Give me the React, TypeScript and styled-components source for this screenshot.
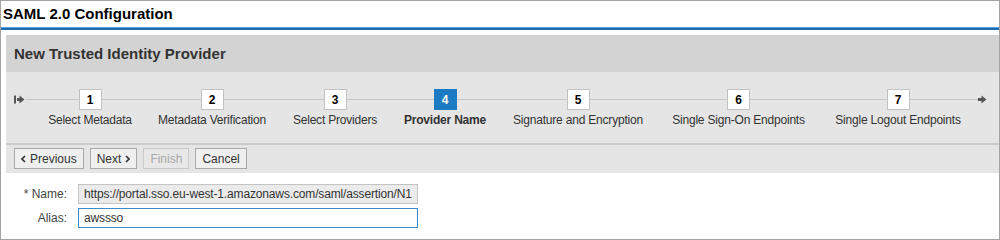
import styled, { createGlobalStyle } from 'styled-components';

const GlobalStyle = createGlobalStyle`
  html, body {
    margin: 0;
    padding: 0;
    background: #ffffff;
  }
  body {
    font-family: "Liberation Sans", Arial, sans-serif;
    font-size: 12px;
    color: #333333;
  }
`;

type Step = { num: number; label: string; width: number };

// widths follow the label lengths of the original wizard
const STEPS: Step[] = [
  { num: 1, label: 'Select Metadata', width: 110 },
  { num: 2, label: 'Metadata Verification', width: 134 },
  { num: 3, label: 'Select Providers', width: 112 },
  { num: 4, label: 'Provider Name', width: 108 },
  { num: 5, label: 'Signature and Encryption', width: 158 },
  { num: 6, label: 'Single Sign-On Endpoints', width: 163 },
  { num: 7, label: 'Single Logout Endpoints', width: 156 },
];

const CURRENT = 4;

function StartIcon() {
  return (
    <svg width="11" height="9" viewBox="0 0 11 9">
      <rect x="0" y="0.5" width="2" height="8" fill="#555" />
      <rect x="3" y="3" width="3" height="3" fill="#555" />
      <polygon points="5.5,0.5 10.5,4.5 5.5,8.5" fill="#555" />
    </svg>
  );
}

function EndIcon() {
  return (
    <svg width="9" height="9" viewBox="0 0 9 9">
      <rect x="0" y="3" width="4" height="3" fill="#555" />
      <polygon points="3.5,0.5 8.5,4.5 3.5,8.5" fill="#555" />
    </svg>
  );
}

function Chevron({ dir }: { dir: 'left' | 'right' }) {
  const pts = dir === 'left' ? '4,1 1,4 4,7' : '1,1 4,4 1,7';
  return (
    <svg width="5" height="8" viewBox="0 0 5 8">
      <polyline points={pts} fill="none" stroke="#333" strokeWidth="1.6" />
    </svg>
  );
}

export default function App() {
  return (
    <>
      <GlobalStyle />
      <Frame>
        <TitleBar>SAML 2.0 Configuration</TitleBar>
        <Panel>
          <PanelHeader>New Trusted Identity Provider</PanelHeader>
          <Wizard>
            <Cap>
              <CapIcon>
                <StartIcon />
              </CapIcon>
              <Track />
            </Cap>
            {STEPS.map((s) => (
              <StepItem key={s.num} width={s.width}>
                <StepTop>
                  <Track />
                  <StepBox active={s.num === CURRENT}>{s.num}</StepBox>
                  <Track />
                </StepTop>
                <StepLabel active={s.num === CURRENT}>{s.label}</StepLabel>
              </StepItem>
            ))}
            <EndCap>
              <Track />
              <CapIcon>
                <EndIcon />
              </CapIcon>
            </EndCap>
          </Wizard>
          <ButtonBar>
            <Button>
              <Chevron dir="left" /> Previous
            </Button>
            <Button>
              Next <Chevron dir="right" />
            </Button>
            <Button disabled>Finish</Button>
            <Button>Cancel</Button>
          </ButtonBar>
        </Panel>
        <Form>
          <FieldLabel>* Name:</FieldLabel>
          <Input
            readOnly
            disabledLook
            value="https://portal.sso.eu-west-1.amazonaws.com/saml/assertion/N1"
          />
          <FieldLabel>Alias:</FieldLabel>
          <Input readOnly value="awssso" />
        </Form>
      </Frame>
    </>
  );
}

const Frame = styled.div`
  width: 1000px;
  height: 240px;
  box-sizing: border-box;
  border: 1px solid #a3a3a3;
  overflow: hidden;
  background: #fff;
`;

const TitleBar = styled.div`
  height: 27px;
  line-height: 26px;
  padding-left: 2px;
  font-size: 15px;
  font-weight: bold;
  color: #000;
  border-bottom: 2px solid #1d6db2;
  box-shadow: inset 0 -1px 0 #5a9fd8;
`;

const Panel = styled.div`
  margin: 5px 0 0 5px;
  background: #e5e5e5;
`;

const PanelHeader = styled.div`
  height: 37px;
  line-height: 38px;
  padding-left: 8px;
  background: #d3d3d3;
  font-size: 15px;
  font-weight: bold;
  color: #333;
`;

const Wizard = styled.div`
  display: flex;
  align-items: flex-start;
  height: 73px;
  padding-top: 17px;
  box-sizing: border-box;
  border-bottom: 2px solid #cbcbcb;
`;

const Cap = styled.div`
  width: 21px;
  flex-shrink: 0;
  display: flex;
  align-items: center;
  height: 21px;
  padding-left: 8px;
`;

const EndCap = styled.div`
  flex: 1;
  display: flex;
  align-items: center;
  height: 21px;
  padding-right: 11px;
`;

const CapIcon = styled.div`
  display: flex;
  align-items: center;
  padding-right: 1px;
`;

const Track = styled.div`
  flex: 1;
  height: 1px;
  background: #c4c4c4;
`;

const StepItem = styled.div<{ width: number }>`
  width: ${({ width }) => width}px;
  flex-shrink: 0;
  display: flex;
  flex-direction: column;
  align-items: center;
`;

const StepTop = styled.div`
  width: 100%;
  display: flex;
  align-items: center;
`;

const StepBox = styled.div<{ active?: boolean }>`
  width: 23px;
  height: 21px;
  box-sizing: border-box;
  display: flex;
  align-items: center;
  justify-content: center;
  font-weight: bold;
  font-size: 12px;
  color: ${({ active }) => (active ? '#fff' : '#000')};
  background: ${({ active }) => (active ? '#1a7bc2' : '#fff')};
  border: 1px solid ${({ active }) => (active ? '#1a7bc2' : '#c2c2c2')};
`;

const StepLabel = styled.div<{ active?: boolean }>`
  padding-top: 3px;
  white-space: nowrap;
  font-size: 12px;
  letter-spacing: -0.2px;
  font-weight: ${({ active }) => (active ? 'bold' : 'normal')};
  color: #333;
`;

const ButtonBar = styled.div`
  display: flex;
  gap: 6px;
  height: 28px;
  padding: 3px 0 0 8px;
  box-sizing: border-box;
`;

const Button = styled.button`
  height: 21px;
  padding: 0 6px;
  display: inline-flex;
  align-items: center;
  gap: 4px;
  font-family: "Liberation Sans", Arial, sans-serif;
  font-size: 12px;
  color: #333;
  background: #efefef;
  border: 1px solid #a9a9a9;
  border-radius: 0;
  &:disabled {
    color: #a8a8a8;
    border-color: #c9c9c9;
    background: #e8e8e8;
  }
`;

const Form = styled.div`
  display: grid;
  grid-template-columns: 66px 340px;
  column-gap: 11px;
  row-gap: 4px;
  align-items: center;
  padding-top: 11px;
`;

const FieldLabel = styled.div`
  text-align: right;
  font-size: 12px;
  color: #444;
`;

const Input = styled.input<{ disabledLook?: boolean }>`
  height: 20px;
  box-sizing: border-box;
  padding: 0 4px 0 5px;
  font-family: "Liberation Sans", Arial, sans-serif;
  font-size: 12px;
  letter-spacing: -0.15px;
  color: #333;
  outline: none;
  border-radius: 0;
  background: ${({ disabledLook }) => (disabledLook ? '#ebebeb' : '#fff')};
  border: 1px solid ${({ disabledLook }) => (disabledLook ? '#c4c4c4' : '#3d8cc9')};
`;
